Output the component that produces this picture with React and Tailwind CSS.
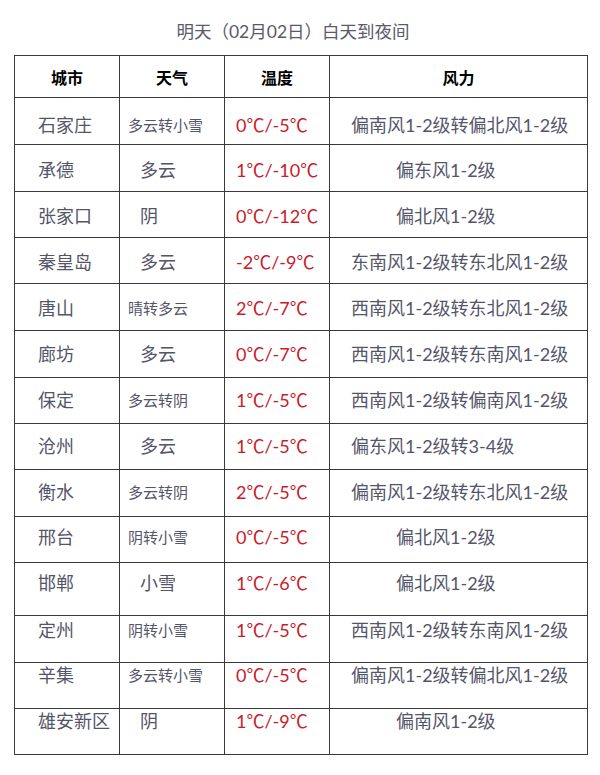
const ROWS = [
  { city: '石家庄', weather: '多云转小雪', temp: '0℃/-5℃', wind: '偏南风1-2级转偏北风1-2级', h: 'h-[47px]', pt: 'pt-[15px]' },
  { city: '承德', weather: '多云', temp: '1℃/-10℃', wind: '偏东风1-2级', h: 'h-[47px]', pt: 'pt-[13px]' },
  { city: '张家口', weather: '阴', temp: '0℃/-12℃', wind: '偏北风1-2级', h: 'h-[46px]', pt: 'pt-[12px]' },
  { city: '秦皇岛', weather: '多云', temp: '-2℃/-9℃', wind: '东南风1-2级转东北风1-2级', h: 'h-[46px]', pt: 'pt-[12px]' },
  { city: '唐山', weather: '晴转多云', temp: '2℃/-7℃', wind: '西南风1-2级转东北风1-2级', h: 'h-[47px]', pt: 'pt-[12px]' },
  { city: '廊坊', weather: '多云', temp: '0℃/-7℃', wind: '西南风1-2级转东南风1-2级', h: 'h-[47px]', pt: 'pt-[11px]' },
  { city: '保定', weather: '多云转阴', temp: '1℃/-5℃', wind: '西南风1-2级转偏南风1-2级', h: 'h-[46px]', pt: 'pt-[10px]' },
  { city: '沧州', weather: '多云', temp: '1℃/-5℃', wind: '偏东风1-2级转3-4级', h: 'h-[46px]', pt: 'pt-[10px]' },
  { city: '衡水', weather: '多云转阴', temp: '2℃/-5℃', wind: '偏南风1-2级转东北风1-2级', h: 'h-[47px]', pt: 'pt-[10px]' },
  { city: '邢台', weather: '阴转小雪', temp: '0℃/-5℃', wind: '偏北风1-2级', h: 'h-[46px]', pt: 'pt-[8px]' },
  { city: '邯郸', weather: '小雪', temp: '1℃/-6℃', wind: '偏北风1-2级', h: 'h-[53px]', pt: 'pt-[8px]' },
  { city: '定州', weather: '阴转小雪', temp: '1℃/-5℃', wind: '西南风1-2级转东南风1-2级', h: 'h-[47px]', pt: 'pt-[2px]' },
  { city: '辛集', weather: '多云转小雪', temp: '0℃/-5℃', wind: '偏南风1-2级转偏北风1-2级', h: 'h-[46px]', pt: 'pt-0' },
  { city: '雄安新区', weather: '阴', temp: '1℃/-9℃', wind: '偏南风1-2级', h: 'h-[46px]', pt: 'pt-0' },
]

const cell = 'border-r border-b border-[#3a3a3a]'

function Row({ row }) {
  const longWeather = row.weather.length > 2
  const longWind = row.wind.length > 7
  return (
    <>
      <div className={`${cell} ${row.h} ${row.pt} pl-[23px] text-[18px] leading-6 text-[#55556a]`}>
        {row.city}
      </div>
      <div
        className={`${cell} ${row.h} ${row.pt} text-[#55556a] leading-6 ${
          longWeather ? 'pl-[8px] text-[15px]' : 'pl-[20px] text-[18px]'
        }`}
      >
        {row.weather}
      </div>
      <div className={`${cell} ${row.h} ${row.pt} pl-[11px] text-[18px] leading-6 text-[#c8202a]`}>
        {row.temp}
      </div>
      <div
        className={`${cell} ${row.h} ${row.pt} text-[18px] leading-6 text-[#55556a] ${
          longWind ? 'pl-[21px]' : 'pl-[66px]'
        }`}
      >
        {row.wind}
      </div>
    </>
  )
}

export default function App() {
  return (
    <div className="w-[600px] h-[775px] bg-white font-['Lato','Noto_Sans_CJK_SC',sans-serif]">
      <h1 className="pt-5 text-center text-[17.5px] leading-6 text-[#5a5a6a] pr-[14px]">
        明天（02月02日）白天到夜间
      </h1>
      <div className="ml-[14px] mt-[11px] w-[574px] grid grid-cols-[105px_105px_105px_258px] border-l border-t border-[#3a3a3a]">
        {['城市', '天气', '温度', '风力'].map((h) => (
          <div
            key={h}
            className={`${cell} h-[42px] pt-[3px] flex items-center justify-center text-[16px] font-bold text-black`}
          >
            {h}
          </div>
        ))}
        {ROWS.map((row) => (
          <Row key={row.city} row={row} />
        ))}
      </div>
    </div>
  )
}
